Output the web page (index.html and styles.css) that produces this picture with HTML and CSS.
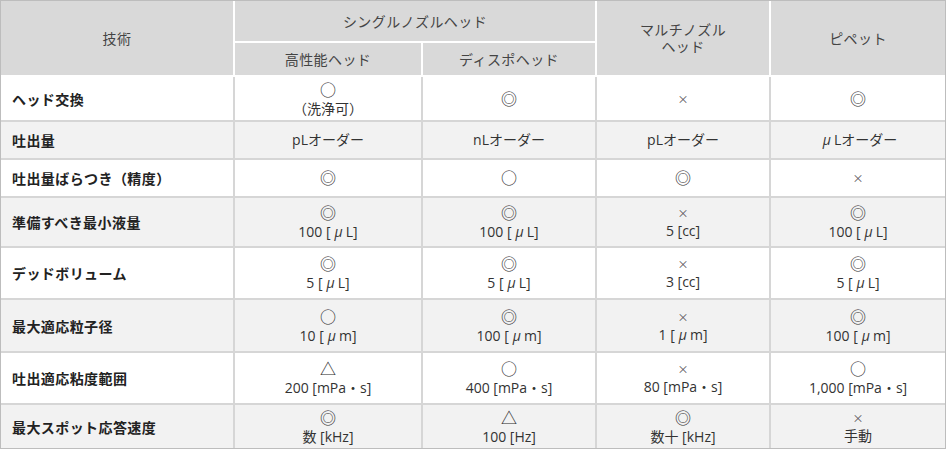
FILE: index.html
```html
<!DOCTYPE html>
<html lang="ja">
<head>
<meta charset="utf-8">
<link rel="stylesheet" href="styles.css">
</head>
<body>
<div class="wrap">
<table class="spec">
  <colgroup>
    <col class="c1"><col class="c2"><col class="c3"><col class="c4"><col class="c5">
  </colgroup>
  <thead>
    <tr class="h1">
      <th rowspan="2">技術</th>
      <th colspan="2">シングルノズルヘッド</th>
      <th rowspan="2">マルチノズル<br>ヘッド</th>
      <th rowspan="2" class="last">ピペット</th>
    </tr>
    <tr class="h2">
      <th>高性能ヘッド</th>
      <th>ディスポヘッド</th>
    </tr>
  </thead>
  <tbody>
    <tr class="r45">
      <td class="lbl">ヘッド交換</td>
      <td><span class="sym">○</span><br>（洗浄可）</td>
      <td><span class="sym">◎</span></td>
      <td><span class="x">×</span></td>
      <td class="last"><span class="sym">◎</span></td>
    </tr>
    <tr class="r38 alt">
      <td class="lbl">吐出量</td>
      <td>pLオーダー</td>
      <td>nLオーダー</td>
      <td>pLオーダー</td>
      <td class="last"><span class="mu">μ</span>Lオーダー</td>
    </tr>
    <tr class="r38">
      <td class="lbl">吐出量ばらつき（精度）</td>
      <td><span class="sym">◎</span></td>
      <td><span class="sym">○</span></td>
      <td><span class="sym">◎</span></td>
      <td class="last"><span class="x">×</span></td>
    </tr>
    <tr class="r50 alt">
      <td class="lbl">準備すべき最小液量</td>
      <td><span class="sym">◎</span><br>100 [<span class="mu">μ</span>L]</td>
      <td><span class="sym">◎</span><br>100 [<span class="mu">μ</span>L]</td>
      <td><span class="x">×</span><br>5 [cc]</td>
      <td class="last"><span class="sym">◎</span><br>100 [<span class="mu">μ</span>L]</td>
    </tr>
    <tr class="r52">
      <td class="lbl">デッドボリューム</td>
      <td><span class="sym">◎</span><br>5 [<span class="mu">μ</span>L]</td>
      <td><span class="sym">◎</span><br>5 [<span class="mu">μ</span>L]</td>
      <td><span class="x">×</span><br>3 [cc]</td>
      <td class="last"><span class="sym">◎</span><br>5 [<span class="mu">μ</span>L]</td>
    </tr>
    <tr class="r53 alt">
      <td class="lbl">最大適応粒子径</td>
      <td><span class="sym">○</span><br>10 [<span class="mu">μ</span>m]</td>
      <td><span class="sym">◎</span><br>100 [<span class="mu">μ</span>m]</td>
      <td><span class="x">×</span><br>1 [<span class="mu">μ</span>m]</td>
      <td class="last"><span class="sym">◎</span><br>100 [<span class="mu">μ</span>m]</td>
    </tr>
    <tr class="r52">
      <td class="lbl">吐出適応粘度範囲</td>
      <td><span class="sym">△</span><br>200 [mPa・s]</td>
      <td><span class="sym">○</span><br>400 [mPa・s]</td>
      <td><span class="x">×</span><br>80 [mPa・s]</td>
      <td class="last"><span class="sym">○</span><br>1,000 [mPa・s]</td>
    </tr>
    <tr class="r44 alt end">
      <td class="lbl">最大スポット応答速度</td>
      <td><span class="sym">◎</span><br>数 [kHz]</td>
      <td><span class="sym">△</span><br>100 [Hz]</td>
      <td><span class="sym">◎</span><br>数十 [kHz]</td>
      <td class="last"><span class="x">×</span><br>手動</td>
    </tr>
  </tbody>
</table>
</div>
</body>
</html>
```

FILE: styles.css
```css
html, body {
  margin: 0;
  padding: 0;
  background: #ffffff;
}

body {
  font-family: "Noto Sans CJK JP", "Noto Sans", sans-serif;
  font-size: 14px;
  color: #333333;
}

.wrap {
  width: 944px;
  border: 1px solid #bdbdbd;
}

.spec {
  width: 944px;
  table-layout: fixed;
  border-collapse: separate;
  border-spacing: 0;
}

.c1 { width: 234px; }
.c2 { width: 188px; }
.c3 { width: 174px; }
.c4 { width: 174px; }
.c5 { width: 174px; }

.spec th {
  background: #d9d9d9;
  font-weight: normal;
  color: #444444;
  text-align: center;
  vertical-align: middle;
  line-height: 17px;
  padding: 0;
  border-right: 2px solid #ffffff;
  border-bottom: 2px solid #ffffff;
  letter-spacing: 0.03em;
}

.spec td {
  background: #ffffff;
  font-family: "Open Sans", "Noto Sans CJK JP", sans-serif;
  text-align: center;
  vertical-align: middle;
  line-height: 18px;
  padding: 0;
  border-right: 2px solid #d6d6d6;
  border-bottom: 2px solid #d6d6d6;
  color: #333333;
}

.spec tr.alt td {
  background: #f2f2f2;
}

.spec .last {
  border-right: none;
}

.spec tr.end td {
  border-bottom: none;
}

.spec td.lbl {
  font-family: "Noto Sans CJK JP", sans-serif;
  text-align: left;
  padding-left: 11px;
  font-weight: bold;
  color: #222222;
  letter-spacing: 0.03em;
}

.sym {
  font-family: "Noto Sans CJK JP", sans-serif;
  font-size: 16px;
  color: #2a2a2a;
}

.x {
  font-family: "Noto Sans CJK JP", sans-serif;
  font-size: 11px;
  color: #555555;
}

.mu {
  display: inline-block;
  margin: 0 3px 0 4px;
  font-style: italic;
}

.h1 { height: 42px; }
.h2 { height: 34px; }
.r45 { height: 45px; }
.r38 { height: 38px; }
.r50 { height: 50px; }
.r52 { height: 52px; }
.r53 { height: 53px; }
.r44 { height: 43px; }
```
